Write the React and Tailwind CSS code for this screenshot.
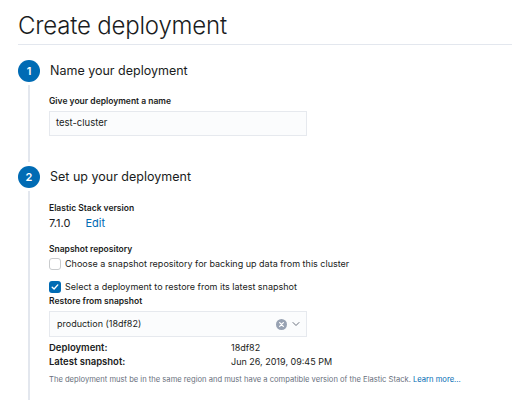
const StepBadge = ({ n }) => (
  <div className="w-[22px] h-[22px] rounded-full bg-[#006bb4] text-white text-[11px] font-semibold flex items-center justify-center shrink-0">
    {n}
  </div>
);

const Label = ({ children, className = "" }) => (
  <div className={`text-[8.5px] font-semibold text-[#1a1c21] ${className}`}>{children}</div>
);

const Checkbox = ({ checked }) =>
  checked ? (
    <div className="w-[12px] h-[12px] rounded-[3px] bg-[#006bb4] flex items-center justify-center shrink-0">
      <svg width="8" height="8" viewBox="0 0 8 8" fill="none">
        <path d="M1.2 4.2 L3.1 6 L6.8 1.9" stroke="white" strokeWidth="1.4" strokeLinecap="round" strokeLinejoin="round" />
      </svg>
    </div>
  ) : (
    <div className="w-[12px] h-[12px] rounded-[3px] bg-white border border-[#c9cbcd] shrink-0" />
  );

export default function App() {
  return (
    <div
      className="w-[512px] h-[400px] overflow-hidden bg-white pl-[18px] text-[#1a1c21]"
      style={{ fontFamily: "Inter, 'Noto Sans', sans-serif" }}
    >
      <div className="pt-[13px] pb-[5px] border-b border-[#e3e7ee]">
        <h1 className="text-[24px] font-light leading-[26px] tracking-[-0.2px]">Create deployment</h1>
      </div>

      {/* Step 1 */}
      <div className="flex items-center gap-[10px] mt-[15px]">
        <StepBadge n="1" />
        <div className="text-[12.5px] leading-[22px]">Name your deployment</div>
      </div>
      <div className="ml-[10px] mt-[3px] border-l-2 border-[#e3e7ee] pl-[19px] pt-[10px] pb-[26px]">
        <Label>Give your deployment a name</Label>
        <div className="mt-[3px] w-[258px] h-[25px] bg-[#fbfcfd] border border-[#e6e9ee] flex items-center pl-[6px] text-[9.5px]">
          test-cluster
        </div>
      </div>

      {/* Step 2 */}
      <div className="flex items-center gap-[10px] mt-[4px]">
        <StepBadge n="2" />
        <div className="text-[12.5px] leading-[22px]">Set up your deployment</div>
      </div>
      <div className="ml-[10px] mt-[3px] border-l-2 border-[#e3e7ee] pl-[19px] pt-[11px] h-[300px]">
        <Label>Elastic Stack version</Label>
        <div className="flex gap-[15px] text-[11px] mt-[1px] leading-[14px]">
          <span>7.1.0</span>
          <span className="text-[#006bb4]">Edit</span>
        </div>

        <Label className="mt-[13px]">Snapshot repository</Label>
        <div className="flex items-center gap-[4px] mt-[2px] text-[9px] leading-[14px]">
          <Checkbox checked={false} />
          <span>Choose a snapshot repository for backing up data from this cluster</span>
        </div>

        <div className="flex items-center gap-[4px] mt-[9px] text-[9px] leading-[14px]">
          <Checkbox checked />
          <span>Select a deployment to restore from its latest snapshot</span>
        </div>
        <Label className="mt-[1px]">Restore from snapshot</Label>
        <div className="mt-[3px] w-[258px] h-[26px] bg-[#fbfcfd] border border-[#e6e9ee] flex items-center pl-[7px] pr-[5px] text-[9px]">
          <span className="flex-1">production (18df82)</span>
          <svg width="11" height="11" viewBox="0 0 12 12">
            <circle cx="6" cy="6" r="6" fill="#98a2b3" />
            <path d="M4 4 L8 8 M8 4 L4 8" stroke="white" strokeWidth="1.4" strokeLinecap="round" />
          </svg>
          <svg width="10" height="10" viewBox="0 0 10 10" className="ml-[4px]">
            <path d="M2 3.5 L5 6.5 L8 3.5" stroke="#69707d" strokeWidth="1" fill="none" strokeLinecap="round" strokeLinejoin="round" />
          </svg>
        </div>

        <div className="grid grid-cols-[182px_1fr] mt-[4px] text-[9px] leading-[14px]">
          <span className="font-semibold text-[9.5px]">Deployment:</span>
          <span>18df82</span>
          <span className="font-semibold text-[9.5px]">Latest snapshot:</span>
          <span>Jun 26, 2019, 09:45 PM</span>
        </div>

        <div className="mt-[5px] text-[7.6px] text-[#69707d] leading-[12px] whitespace-nowrap">
          The deployment must be in the same region and must have a compatible version of the Elastic Stack.{" "}
          <span className="text-[#006bb4]">Learn more...</span>
        </div>
      </div>
    </div>
  );
}
